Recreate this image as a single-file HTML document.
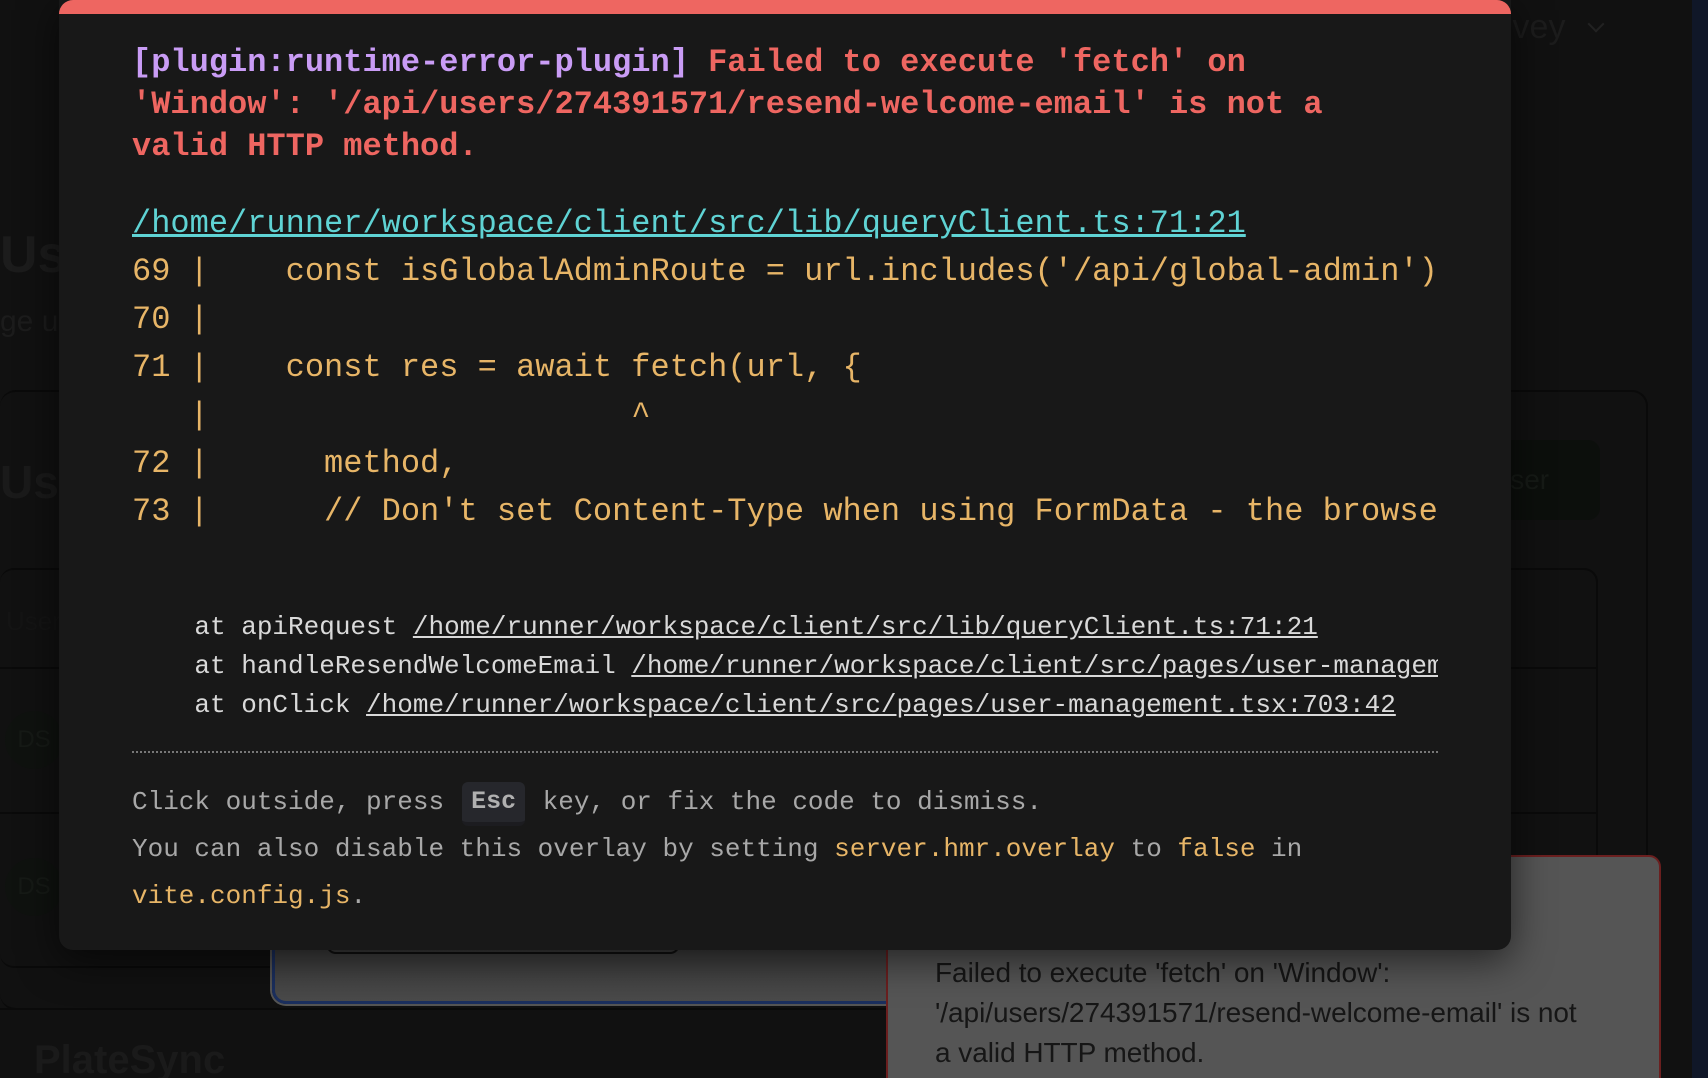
<!DOCTYPE html>
<html><head><meta charset="utf-8"><style>
*{margin:0;padding:0;box-sizing:border-box}
html,body{width:1708px;height:1078px;overflow:hidden;background:#111;position:relative;font-family:"Liberation Sans",sans-serif}
.abs{position:absolute}
.mono{font-family:"Liberation Mono",monospace}
.modal{left:59px;top:0;width:1452px;height:950px;background:#181818;border-radius:0 0 14px 14px;overflow:hidden;box-shadow:0 10px 40px rgba(0,0,0,.6)}
.bar{left:0;top:0;width:100%;height:14px;background:#ee6661;border-radius:14px 14px 0 0}
.inner{left:73px;width:1306px;overflow:hidden;white-space:pre}
.t{top:42px;width:1290px;font-size:32px;line-height:42px;font-weight:bold;color:#ee6661;white-space:normal}
.t .p{color:#c99cf5}
.link{top:203px;font-size:32px;line-height:42px;color:#5fd3d4;text-decoration:underline}
.code{top:248px;font-size:32px;line-height:48px;color:#e7b567}
.stack{top:608px;font-size:26px;line-height:39px;color:#d9d9d9}
.stack u{text-decoration:underline}
.dot{top:751px;left:73px;width:1306px;border-top:2px dotted #777}
.foot{top:778px;font-size:26px;line-height:47px;color:#a8a8a8;white-space:normal}
.foot .y{color:#e7b567}
.kbd{display:inline-block;background:#26272c;border-radius:6px;padding:0 9px;line-height:40px;font-size:25px;font-weight:bold;color:#b0b0b0;border-bottom:4px solid #1c1c20;vertical-align:middle;margin:4px 2px 0 18px}
</style></head><body>
<div class="abs" style="left:1692px;top:0;width:16px;height:1078px;background:#101728"></div>
<div class="abs" style="left:1505px;top:8px;font-size:34px;color:#1c1c1c">ivey</div>
<div class="abs" style="left:1590px;top:18px;width:12px;height:12px;border-right:2px solid #222;border-bottom:2px solid #222;transform:rotate(45deg)"></div>
<div class="abs" style="left:0;top:225px;font-size:52px;font-weight:bold;color:#1c1c1c">Use</div>
<div class="abs" style="left:0;top:305px;font-size:30px;color:#1c1c1c">ge u</div>
<div class="abs" style="left:0;top:390px;width:1648px;height:620px;border:2px solid #0a0a0a;border-radius:16px;border-left:none"></div>
<div class="abs" style="left:0;top:455px;font-size:46px;font-weight:bold;color:#1a1a1a">Use</div>
<div class="abs" style="left:1490px;top:440px;width:110px;height:80px;background:#0c0f0c;border-radius:12px;color:#161a16;font-size:28px;line-height:80px">User</div>
<div class="abs" style="left:0;top:568px;width:1598px;height:400px;border:2px solid #0a0a0a;border-radius:14px;border-left:none"></div>
<div class="abs" style="left:0;top:667px;width:1598px;border-top:2px solid #0a0a0a"></div>
<div class="abs" style="left:6px;top:606px;font-size:26px;color:#141414">User</div>
<div class="abs" style="left:0;top:812px;width:1598px;border-top:2px solid #0a0a0a"></div>
<div class="abs" style="left:5px;top:711px;width:58px;height:58px;border-radius:50%;background:#0f120f;color:#161a16;font-size:24px;line-height:58px;text-align:center">DS</div>
<div class="abs" style="left:5px;top:858px;width:58px;height:58px;border-radius:50%;background:#0f120f;color:#161a16;font-size:24px;line-height:58px;text-align:center">DS</div>
<div class="abs" style="left:0;top:1008px;width:900px;border-top:2px solid #0a0a0a"></div>
<div class="abs" style="left:34px;top:1038px;font-size:40px;font-weight:bold;color:#1a1a1a">PlateSync</div>
<div class="abs" style="left:272px;top:900px;width:640px;height:104px;background:linear-gradient(#333,#4a4a4a);border:3px solid #1b2f5e;border-radius:14px;box-shadow:0 0 0 2px #555"></div>
<div class="abs" style="left:326px;top:900px;width:354px;height:54px;border:2px solid #111;border-radius:10px"></div>
<div class="abs" style="left:886px;top:855px;width:775px;height:240px;background:#555;border:2px solid #6b1f1f;border-radius:12px"></div>
<div class="abs" style="left:935px;top:953px;width:720px;font-size:28px;line-height:40px;color:#161616;letter-spacing:-0.05px;white-space:nowrap">Failed to execute 'fetch' on 'Window':<br>'/api/users/274391571/resend-welcome-email' is not<br>a valid HTTP method.</div>
<div class="abs modal">
<div class="abs bar"></div>
<div class="abs inner mono t"><span class="p">[plugin:runtime-error-plugin]</span> Failed to execute 'fetch' on 'Window': '/api/users/274391571/resend-welcome-email' is not a valid HTTP method.</div>
<div class="abs inner mono link">/home/runner/workspace/client/src/lib/queryClient.ts:71:21</div>
<div class="abs inner mono code">69 |    const isGlobalAdminRoute = url.includes('/api/global-admin');
70 |
71 |    const res = await fetch(url, {
   |                      ^
72 |      method,
73 |      // Don't set Content-Type when using FormData - the browser will set it</div>
<div class="abs inner mono stack">    at apiRequest <u>/home/runner/workspace/client/src/lib/queryClient.ts:71:21</u>
    at handleResendWelcomeEmail <u>/home/runner/workspace/client/src/pages/user-management.tsx:420:7</u>
    at onClick <u>/home/runner/workspace/client/src/pages/user-management.tsx:703:42</u></div>
<div class="abs dot"></div>
<div class="abs inner mono foot">Click outside, press<span class="kbd">Esc</span> key, or fix the code to dismiss.<br>You can also disable this overlay by setting <span class="y">server.hmr.overlay</span> to <span class="y">false</span> in <span class="y">vite.config.js</span>.</div>
</div>
</body></html>
